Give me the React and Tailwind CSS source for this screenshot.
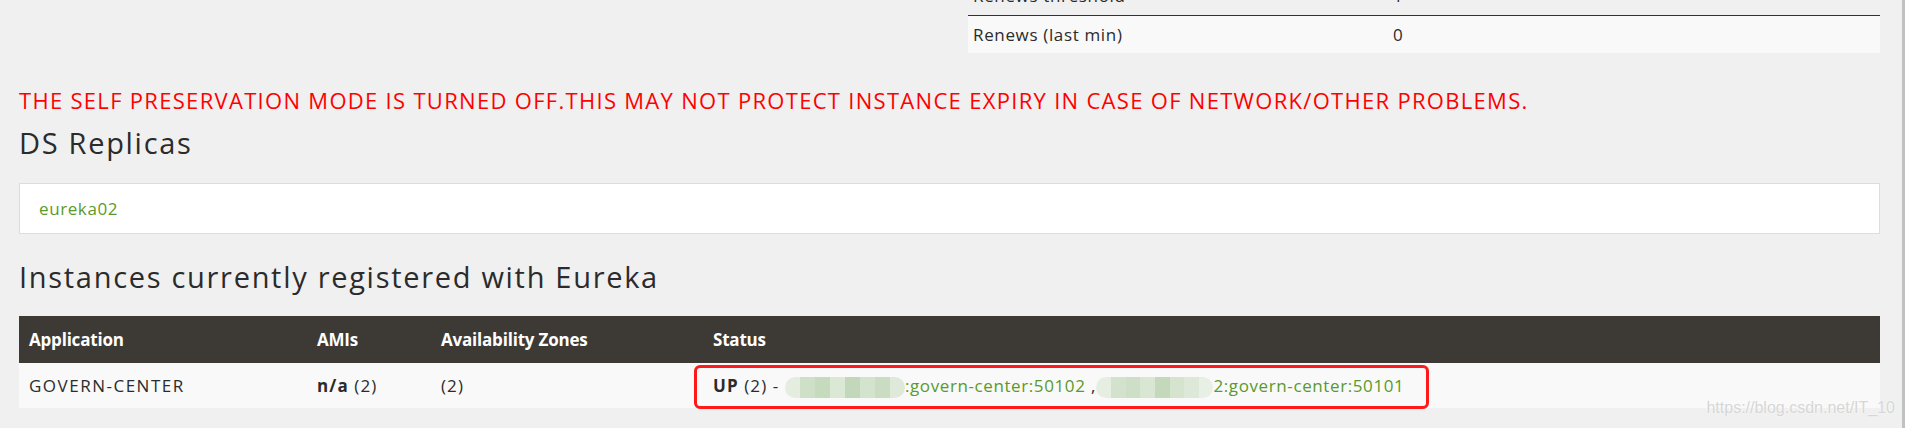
import React from "react";

const mosaicA = ["#e4ede0", "#cfe0c8", "#c6dabe", "#dce8d6", "#c3d8ba", "#d4e3cd", "#cadcc2", "#dfe9da"];
const mosaicB = ["#e6eee2", "#d3e2cc", "#cddfc6", "#d9e6d3", "#c4d8bb", "#d6e4cf", "#dde8d8", "#e8efe4"];

const Mosaic = ({ colors, width }) => (
  <span
    className="inline-flex h-[21px] rounded-full overflow-hidden align-middle"
    style={{ width }}
  >
    {colors.map((c, i) => (
      <span key={i} className="flex-1 h-full" style={{ background: c }} />
    ))}
  </span>
);

const App = () => {
  return (
    <div className="relative flex h-[428px] overflow-hidden bg-[#f0f0f0] text-[#2b2b2b] font-['Open_Sans',sans-serif]">
      <div className="flex-1 pl-[19px] pr-[22px]">
        {/* tableau général, coupé en haut */}
        <div className="flex justify-end">
          <div className="w-[912px] -mt-[23px] text-[17px] tracking-[0.65px]">
            <div className="grid grid-cols-[420px_1fr] h-[38px] items-center px-[5px]">
              <span>Renews threshold</span>
              <span>1</span>
            </div>
            <div className="grid grid-cols-[420px_1fr] h-[38px] items-center px-[5px] bg-[#f9f9f9] border-t border-[#333]">
              <span>Renews (last min)</span>
              <span>0</span>
            </div>
          </div>
        </div>

        <h4 className="mt-[34px] text-[22px] leading-[26px] tracking-[1.3px] text-[#ff0000]">
          THE SELF PRESERVATION MODE IS TURNED OFF.THIS MAY NOT PROTECT INSTANCE EXPIRY IN CASE OF NETWORK/OTHER PROBLEMS.
        </h4>

        <h2 className="mt-[13px] text-[29px] leading-[34px] tracking-[1.7px]">DS Replicas</h2>
        <div className="mt-[23px] h-[51px] bg-white border border-[#ddd] flex items-center px-[19px]">
          <a className="text-[17px] tracking-[0.6px] text-[#5a9a2c]">eureka02</a>
        </div>

        <h2 className="mt-[26px] text-[29px] leading-[34px] tracking-[1.7px]">
          Instances currently registered with Eureka
        </h2>

        <div className="mt-[22px] text-[17px]">
          <div className="grid grid-cols-[288px_124px_272px_1fr] h-[47px] items-center bg-[#3d3a35] text-white font-bold tracking-[-0.2px]">
            <div className="px-[10px]">Application</div>
            <div className="px-[10px]">AMIs</div>
            <div className="px-[10px]">Availability Zones</div>
            <div className="px-[10px]">Status</div>
          </div>
          <div className="grid grid-cols-[288px_124px_272px_1fr] h-[45px] items-center bg-[#f9f9f9] tracking-[1.1px]">
            <div className="px-[10px] tracking-[1.5px]">GOVERN-CENTER</div>
            <div className="px-[10px]">
              <b>n/a</b> (2)
            </div>
            <div className="px-[10px]">(2)</div>
            <div className="px-[10px] relative self-stretch flex items-center whitespace-nowrap">
              <span>
                <b>UP</b> (2) -{" "}
                <Mosaic colors={mosaicA} width={120} />
                <a className="text-[#5a9a2c] tracking-[0.6px]">:govern-center:50102</a> ,
                <Mosaic colors={mosaicB} width={117} />
                <a className="text-[#5a9a2c] tracking-[0.6px]">2:govern-center:50101</a>
              </span>
              <span className="absolute left-[-9px] top-[2px] w-[735px] h-[44px] border-[3px] border-[#ff1a1a] rounded-[6px]" />
            </div>
          </div>
        </div>
      </div>
      <div className="w-[3px] bg-[#c1c1c1]" />

      <span className="absolute right-[10px] bottom-[12px] text-[16px] leading-[16px] text-[#d6d6d6] font-['Liberation_Sans',sans-serif] [text-shadow:0_0_2px_#ffffff]">
        https://blog.csdn.net/IT_10
      </span>
    </div>
  );
};

export default App;
